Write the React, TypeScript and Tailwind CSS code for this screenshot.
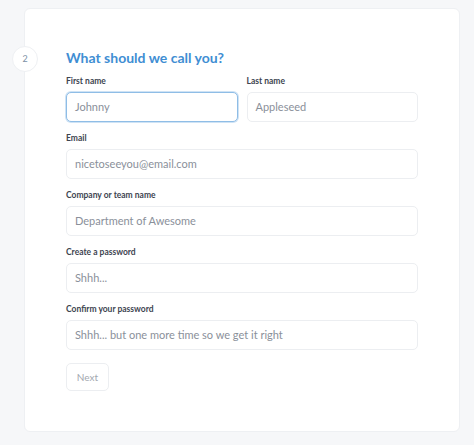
import React from 'react'

type Field = { label: string; value: string; focused?: boolean }

function Input({ label, value, focused }: Field) {
  return (
    <div className="flex flex-col">
      <label className="text-[8.5px] font-bold text-[#3d4450] leading-[9px] mb-[6px]">{label}</label>
      <div
        className={
          'h-[30px] rounded-[5px] border bg-white flex items-center px-[8px] text-[11px] text-[#8a909a] ' +
          (focused ? 'border-[#8fbde6] shadow-[0_0_0_1px_#cfe3f5]' : 'border-[#eceef1]')
        }
      >
        {value}
      </div>
    </div>
  )
}

export default function App() {
  return (
    <div className="min-h-[445px] w-[474px] bg-[#f6f7f9] pt-[8px] pl-[24px] pr-[14px] pb-[13px] font-['Lato','Liberation_Sans',sans-serif]">
      <div className="relative bg-white rounded-[6px] border border-[#eef0f3] h-[424px] pl-[41px] pr-[41px] pt-[39px]">
        <div className="absolute left-[-13px] top-[37px] w-[26px] h-[26px] rounded-full bg-white border border-[#eef0f3] flex items-center justify-center text-[9px] text-[#7c8fa6]">
          2
        </div>
        <h1 className="text-[14px] font-bold text-[#3f8ed3] leading-[20px] mb-[9px]">What should we call you?</h1>
        <div className="flex flex-col gap-[12px]">
          <div className="grid grid-cols-2 gap-[9px]">
            <Input label="First name" value="Johnny" focused />
            <Input label="Last name" value="Appleseed" />
          </div>
          <Input label="Email" value="nicetoseeyou@email.com" />
          <Input label="Company or team name" value="Department of Awesome" />
          <Input label="Create a password" value="Shhh..." />
          <Input label="Confirm your password" value="Shhh... but one more time so we get it right" />
        </div>
        <button className="mt-[13px] h-[28px] w-[43px] rounded-[5px] border border-[#eceef1] bg-white text-[10px] text-[#a3a8b0]">
          Next
        </button>
      </div>
    </div>
  )
}
